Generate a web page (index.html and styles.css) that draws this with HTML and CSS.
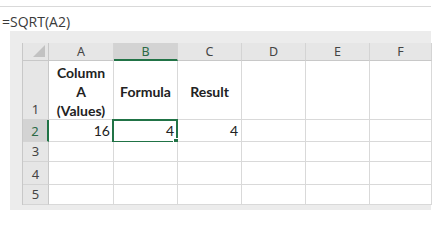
FILE: index.html
```html
<!DOCTYPE html>
<html lang="en">
  <head>
    <meta charset="UTF-8" />
    <title>SQRT sheet</title>
    <link rel="stylesheet" href="styles.css">
  </head>
  <body>
    <div class="formula-bar">=SQRT(A2)</div>

    <div class="sheet">
      <div class="grid">
        <div class="corner"></div>
        <div class="col-head">A</div>
        <div class="col-head active">B</div>
        <div class="col-head">C</div>
        <div class="col-head">D</div>
        <div class="col-head">E</div>
        <div class="col-head">F</div>

        <div class="row-head">1</div>
        <div class="cell bold center">Column<br>A<br>(Values)</div>
        <div class="cell bold center">Formula</div>
        <div class="cell bold center">Result</div>
        <div class="cell"></div>
        <div class="cell"></div>
        <div class="cell"></div>

        <div class="row-head active">2</div>
        <div class="cell num">16</div>
        <div class="cell num selected">4</div>
        <div class="cell num">4</div>
        <div class="cell"></div>
        <div class="cell"></div>
        <div class="cell"></div>

        <div class="row-head">3</div>
        <div class="cell"></div>
        <div class="cell"></div>
        <div class="cell"></div>
        <div class="cell"></div>
        <div class="cell"></div>
        <div class="cell"></div>

        <div class="row-head">4</div>
        <div class="cell"></div>
        <div class="cell"></div>
        <div class="cell"></div>
        <div class="cell"></div>
        <div class="cell"></div>
        <div class="cell"></div>

        <div class="row-head">5</div>
        <div class="cell"></div>
        <div class="cell"></div>
        <div class="cell"></div>
        <div class="cell"></div>
        <div class="cell"></div>
        <div class="cell"></div>
      </div>
    </div>
  </body>
</html>
```

FILE: styles.css
```css
* {
  box-sizing: border-box;
}

body {
  margin: 0;
  background: #fff;
  font-family: "Noto Sans", "Open Sans", sans-serif;
}

.formula-bar {
  margin-top: 6px;
  width: 431px;
  height: 25px;
  border-top: 1px solid #d9d9d9;
  padding: 2px 0 0 2px;
  font-family: "Open Sans", sans-serif;
  font-size: 14px;
  line-height: 25px;
  color: #3a3a3a;
}

.sheet {
  margin-left: 10px;
  width: 421px;
  height: 179px;
  background: #ececec;
  padding: 12px 0 0 12px;
}

.grid {
  display: grid;
  grid-template-columns: 26px 65px 64px 64px 64px 64px 62px;
  grid-template-rows: 18px 59px 22px 20px 23px 20px;
  border-left: 1px solid #c8c8c8;
}

.corner {
  position: relative;
  background: #e6e6e6;
  border-right: 1px solid #c8c8c8;
  border-bottom: 1px solid #c8c8c8;
}

.corner::after {
  content: "";
  position: absolute;
  right: 3px;
  bottom: 3px;
  border-left: 12px solid transparent;
  border-bottom: 12px solid #c2c2c2;
}

.col-head {
  background: #e6e6e6;
  border-right: 1px solid #d4d4d4;
  border-bottom: 1px solid #c8c8c8;
  font-size: 12.5px;
  line-height: 17px;
  color: #444;
  text-align: center;
}

.col-head.active {
  background: #d3d3d3;
  border-bottom: 2px solid #217346;
  color: #2b6a45;
}

.row-head {
  display: flex;
  align-items: flex-end;
  justify-content: center;
  background: #e6e6e6;
  border-right: 1px solid #c8c8c8;
  border-bottom: 1px solid #d4d4d4;
  font-size: 13px;
  line-height: 19px;
  color: #444;
}

.row-head.active {
  background: #d3d3d3;
  border-right: 2px solid #217346;
  color: #2b6a45;
}

.cell {
  position: relative;
  background: #fff;
  border-right: 1px solid #d9d9d9;
  border-bottom: 1px solid #d9d9d9;
  font-family: Lato, "Open Sans", sans-serif;
  font-size: 14px;
  color: #222;
}

.bold {
  font-weight: bold;
  line-height: 19px;
  padding-top: 3px;
}

.center {
  display: flex;
  align-items: center;
  justify-content: center;
  text-align: center;
}

.num {
  display: flex;
  align-items: flex-end;
  justify-content: flex-end;
  padding-right: 3px;
  line-height: 21px;
}

.selected::before {
  content: "";
  position: absolute;
  left: -2px;
  top: -1px;
  right: -1px;
  bottom: -2px;
  border: 2px solid #217346;
}

.selected::after {
  content: "";
  position: absolute;
  right: -4px;
  bottom: -5px;
  width: 6px;
  height: 6px;
  background: #217346;
  border: 1px solid #fff;
}
```
